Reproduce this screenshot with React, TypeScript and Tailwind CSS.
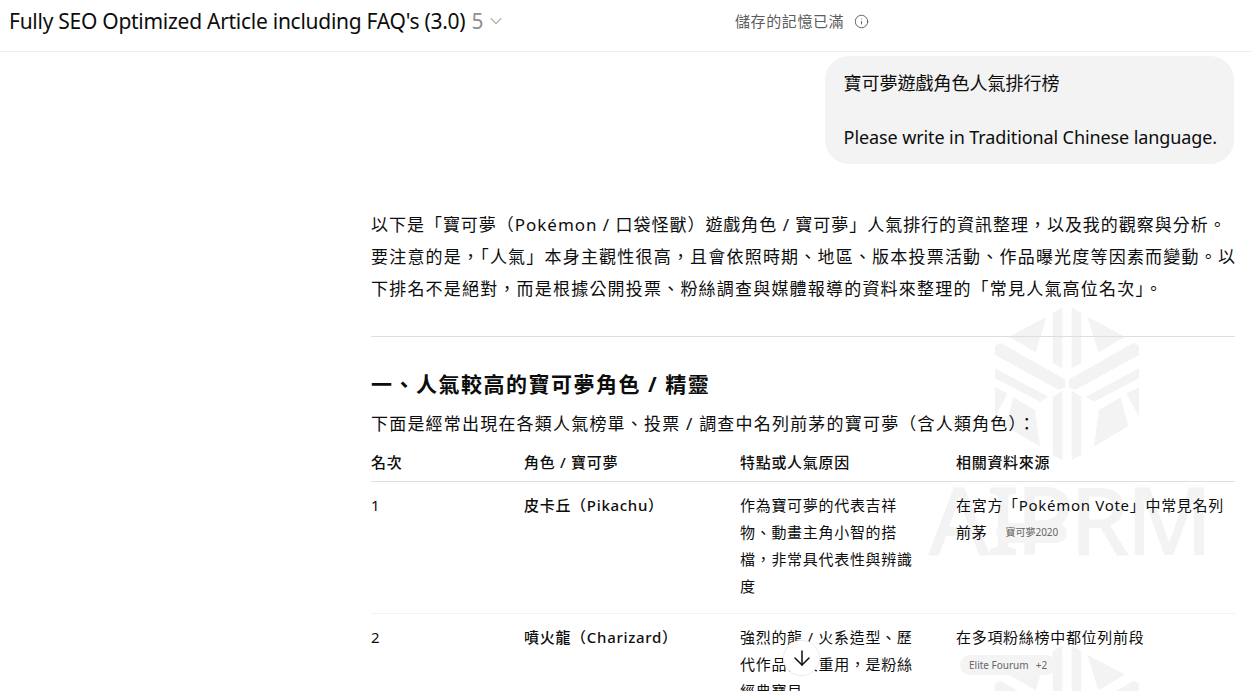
import React from "react";
import { ChevronDown, Info, ArrowDown } from "lucide-react";

const font = { fontFamily: '"Noto Sans", "Noto Sans CJK TC", sans-serif' };

function Logo({ className }: { className: string }) {
  return (
    <svg viewBox="0 0 495 510" className={className} fill="#f3f3f3">
      <polygon points="203,40 232,22 232,205 203,190" />
      <polygon points="289,40 260,22 260,205 289,190" />
      <polygon points="185,50 152,157 72,110" />
      <polygon points="307,50 340,157 420,110" />
      <polygon points="30,138 45,128 240,238 240,262 222,270 30,165" />
      <polygon points="462,138 447,128 252,238 252,262 270,270 462,165" />
      <polygon points="30,205 190,290 165,305 30,235" />
      <polygon points="462,205 302,290 327,305 462,235" />
      <polygon points="30,262 68,280 30,350" />
      <polygon points="462,262 424,280 462,350" />
      <polygon points="85,292 150,330 165,440 62,378" />
      <polygon points="407,292 342,330 327,440 430,378" />
      <polygon points="203,290 232,272 232,480 203,465" />
      <polygon points="289,290 260,272 260,480 289,465" />
    </svg>
  );
}

type Row = { n: string; name: string; why: string[]; src: React.ReactNode };

function Chip({ children, className = "" }: { children: React.ReactNode; className?: string }) {
  return (
    <span className={`inline-flex h-[20px] items-center rounded-full bg-[#f4f4f4] px-[9px] text-[10px] tracking-normal text-[#666] ${className}`}>
      {children}
    </span>
  );
}

const rows: Row[] = [
  {
    n: "1",
    name: "皮卡丘（Pikachu）",
    why: ["作為寶可夢的代表吉祥", "物、動畫主角小智的搭", "檔，非常具代表性與辨識", "度"],
    src: (
      <>
        <div>在宮方「Pokémon Vote」中常見名列</div>
        <div className="flex items-center">
          前茅<Chip className="ml-[9px]">寶可夢2020</Chip>
        </div>
      </>
    ),
  },
  {
    n: "2",
    name: "噴火龍（Charizard）",
    why: ["強烈的龍 / 火系造型、歷", "代作品多次重用，是粉絲", "經典寶貝"],
    src: (
      <>
        <div>在多項粉絲榜中都位列前段</div>
        <div className="flex items-center">
          <Chip className="ml-[4px] mt-[4px] gap-[7px]">
            <span>Elite Fourum</span>
            <span>+2</span>
          </Chip>
        </div>
      </>
    ),
  },
];

export default function App() {
  return (
    <div className="relative h-[691px] w-[1252px] overflow-hidden bg-white text-[#0d0d0d]" style={font}>
      <div className="pointer-events-none absolute left-[985px] top-[300px] z-0 h-[170px] w-[165px]">
        <Logo className="h-full w-full" />
      </div>
      <div className="pointer-events-none absolute left-[985px] top-[638px] z-0 h-[170px] w-[165px]">
        <Logo className="h-full w-full" />
      </div>
      <div className="pointer-events-none absolute left-[928px] top-[470px] z-0 whitespace-nowrap text-[95px] font-medium leading-[96px] tracking-[-4px] text-[#f3f3f3]">
        AIPRM
      </div>

      <header className="relative z-10 flex h-[52px] items-center border-b border-[#efefef] pb-[9px] pl-[9px]">
        <div className="flex w-[500px] items-center">
          <span className="whitespace-nowrap text-[21px] leading-[28px] tracking-[-0.27px] text-[#0d0d0d]">Fully SEO Optimized Article including FAQ's (3.0)</span>
          <span className="ml-[6px] text-[21px] leading-[28px] text-[#8f8f8f]">5</span>
          <ChevronDown className="ml-[3px] text-[#8f8f8f]" size={20} strokeWidth={1.25} />
        </div>
        <div className="ml-[226px] flex items-center">
          <span className="text-[15px] tracking-[0.6px] text-[#5d5d5d]">儲存的記憶已滿</span>
          <Info className="ml-[10px] text-[#5d5d5d]" size={15} strokeWidth={1.5} />
        </div>
      </header>

      <main className="relative z-10 flex flex-col">
        <div className="mr-[18px] mt-[4px] self-end rounded-[24px] bg-[#f3f3f3] pb-[13px] pl-[19px] pr-[17px] pt-[14px] text-[18px] leading-[27px]">
          <p>寶可夢遊戲角色人氣排行榜</p>
          <p className="mt-[27px] whitespace-nowrap tracking-[-0.1px]">Please write in Traditional Chinese language.</p>
        </div>

        <article className="ml-[371px] mt-[45px] w-[864px]">
          <div className="whitespace-nowrap text-[17px] leading-[32px]">
            <p className="tracking-[0.97px]">以下是「寶可夢（Pokémon / 口袋怪獸）遊戲角色 / 寶可夢」人氣排行的資訊整理，以及我的觀察與分析。</p>
            <p className="tracking-[1.2px]">要注意的是，「人氣」本身主觀性很高，且會依照時期、地區、版本投票活動、作品曝光度等因素而變動。以</p>
            <p className="tracking-[1.2px]">下排名不是絕對，而是根據公開投票、粉絲調查與媒體報導的資料來整理的「常見人氣高位名次」。</p>
          </div>
          <hr className="mt-[31px] border-[#dedede]" />
          <h3 className="mt-[31px] text-[21px] font-bold leading-[32px] tracking-[1.5px]">一、人氣較高的寶可夢角色 / 精靈</h3>
          <p className="mt-[8px] whitespace-nowrap text-[17px] leading-[32px] tracking-[1.2px]">下面是經常出現在各類人氣榜單、投票 / 調查中名列前茅的寶可夢（含人類角色）：</p>

          <div className="mt-[10px] grid grid-cols-[153px_216px_216px_279px] border-b border-[#dedede] pb-[7px] text-[15px] font-medium leading-[24px] tracking-[0.7px]">
            <div>名次</div>
            <div>角色 / 寶可夢</div>
            <div>特點或人氣原因</div>
            <div>相關資料來源</div>
          </div>

          {rows.map((r) => (
            <div key={r.n} className="grid grid-cols-[153px_216px_216px_279px] border-b border-[#f3f3f3] pb-[13px] pt-[10px] text-[15px] leading-[27px] tracking-[0.7px]">
              <div>{r.n}</div>
              <div className="font-medium">{r.name}</div>
              <div>
                {r.why.map((w) => (
                  <div key={w} className="whitespace-nowrap">{w}</div>
                ))}
              </div>
              <div className="whitespace-nowrap">{r.src}</div>
            </div>
          ))}
        </article>
      </main>

      <button className="absolute left-[783px] top-[640px] z-20 flex h-[36px] w-[37px] items-center justify-center rounded-full border border-[#ececec] bg-white">
        <ArrowDown size={24} strokeWidth={1.5} className="text-[#0d0d0d]" />
      </button>
    </div>
  );
}
